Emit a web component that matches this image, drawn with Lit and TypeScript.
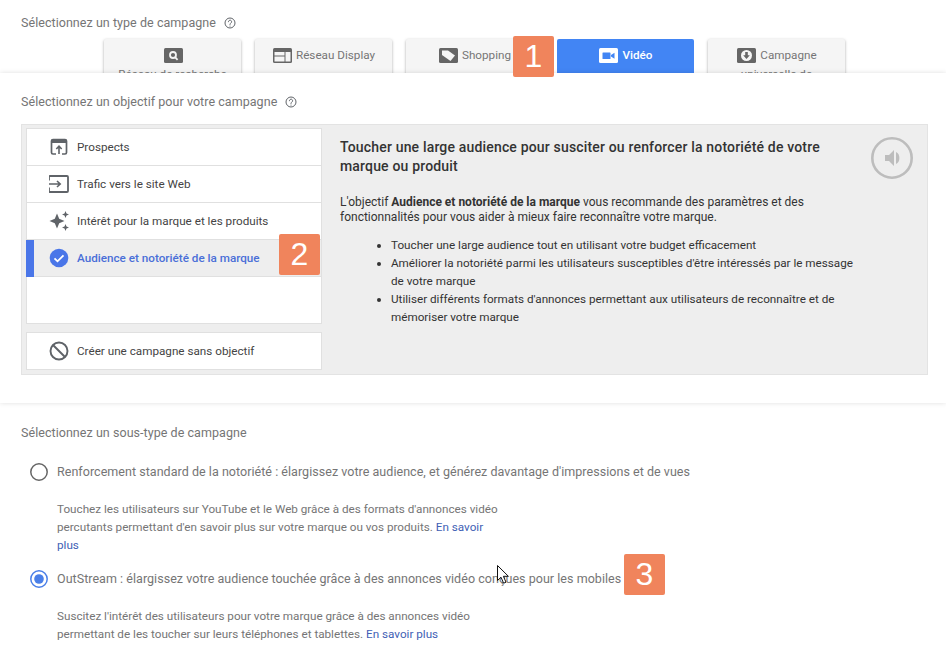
import { LitElement, html, css, svg } from "lit";
import { customElement } from "lit/decorators.js";

const help = html`<svg class="help" viewBox="0 0 24 24" fill="none" stroke="#5f6368" stroke-width="2"><circle cx="12" cy="12" r="10"/><path d="M8.8 9.5a3.2 3.2 0 1 1 5 2.6c-1.2.9-1.8 1.4-1.8 2.9" stroke-linecap="round"/><circle cx="12" cy="18" r="1.2" fill="#5f6368" stroke="none"/></svg>`;

const tabIcon = (inner: unknown, bg = "#666") => html`<svg class="tabicon" viewBox="0 0 19 15"><rect width="19" height="15" rx="1.5" fill="${bg}"/>${inner}</svg>`;

@customElement("app-root")
export class AppRoot extends LitElement {
  static styles = css`
    :host { display: block; position: relative; width: 946px; height: 666px; overflow: hidden; background: #fff; font-family: Roboto, sans-serif; color: #6b6b6b; font-size: 12px; }
    .top { height: 73px; overflow: hidden; box-sizing: border-box; padding: 15px 21px 0; }
    .label { display: flex; align-items: center; gap: 8px; font-size: 12.5px; line-height: 16px; color: #757575; letter-spacing: 0.05px; }
    .help { width: 12px; height: 12px; }
    .tabs { display: flex; gap: 14px; margin: 8px 0 0 83px; }
    .tab { width: 137px; height: 60px; flex: none; box-sizing: border-box; background: #f5f5f5; border-radius: 2px; box-shadow: 0 1px 3px rgba(0,0,0,.35); padding-top: 9px; text-align: center; font-size: 11.7px; line-height: 15px; color: #757575; }
    .tab.on { background: #4285f4; color: #fff; box-shadow: none; font-weight: 500; }
    .tabline { display: flex; justify-content: center; align-items: center; gap: 4px; padding-left: 1px; }
    .second { margin-top: 4px; }
    .tabicon { width: 19px; height: 15px; flex: none; }
    .mid { position: relative; height: 330px; box-sizing: border-box; padding: 21px 18px 0 21px; background: #fff; box-shadow: 0 0 5px rgba(0,0,0,.13); }
    .panel { display: flex; margin-top: 14px; height: 251px; box-sizing: border-box; background: #eee; border: 1px solid #e3e3e3; padding: 3px 4px; }
    .left { width: 296px; flex: none; display: flex; flex-direction: column; gap: 8px; }
    .list { height: 196px; background: #fff; border: 1px solid #e0e0e0; box-sizing: border-box; }
    .row { position: relative; display: flex; align-items: center; height: 37px; box-sizing: border-box; border-bottom: 1px solid #e0e0e0; padding: 0 0 1px 22px; gap: 8px; font-size: 11.7px; color: #444; }
    .row svg { width: 20px; height: 20px; flex: none; }
    .row.on { background: #eee; color: #4a6fd8; font-weight: 500; }
    .row.on::before { content: ""; position: absolute; left: -1px; top: 0; bottom: -1px; width: 8px; background: #4a76e8; }
    .none { height: 38px; background: #fff; border: 1px solid #e0e0e0; box-sizing: border-box; }
    .none .row { height: 36px; border: 0; }
    .right { position: relative; flex: 1; padding: 10px 0 0 18px; color: #333; line-height: 18px; }
    .right h2 { margin: 0; width: 500px; font-size: 14px; font-weight: 500; line-height: 19px; color: #333; letter-spacing: 0.17px; }
    .right p { margin: 19px 0 0; width: 500px; font-size: 12px; line-height: 15px; }
    .right ul { margin: 11px 0 0; width: 525px; padding-left: 51px; font-size: 11.7px; line-height: 18px; box-sizing: border-box; }
    .speaker { position: absolute; right: 10px; top: 9px; width: 42px; height: 42px; }
    .sub { padding: 22px 21px 0; }
    .opt { display: flex; align-items: center; gap: 9px; margin-left: 9px; font-size: 12.5px; line-height: 18px; color: #757575; letter-spacing: 0.04px; }
    .opt svg { width: 18px; height: 18px; flex: none; }
    .desc { margin: 0 0 0 36px; width: 445px; font-size: 11.7px; line-height: 18px; color: #757575; }
    .desc a { color: #3f5fb5; text-decoration: none; }
    .o1 { margin-top: 22px; }
    .d1 { margin-top: 19px; }
    .o2 { margin-top: 16px; }
    .d2 { margin-top: 19px; }
    .badge { position: absolute; width: 41px; height: 41px; border-radius: 2px; background: #f0845c; color: #fff; font-size: 32px; line-height: 41px; text-align: center; font-family: "Liberation Sans", sans-serif; }
    .b1 { left: 513px; top: 36px; }
    .b2 { left: 279px; top: 234px; }
    .b3 { left: 624px; top: 554px; }
    .cursor { position: absolute; left: 497px; top: 565px; width: 13px; height: 20px; }
  `;

  render() {
    return html`
      <div class="top">
        <div class="label">Sélectionnez un type de campagne ${help}</div>
        <div class="tabs">
          <div class="tab">
            <div class="tabline">${tabIcon(svg`<circle cx="9" cy="7" r="3" fill="none" stroke="#f5f5f5" stroke-width="1.800"/><path d="M11 9.200l2.600 2.600" stroke="#f5f5f5" stroke-width="1.800"/>`)}</div>
            <div class="second">Réseau de recherche</div>
          </div>
          <div class="tab"><div class="tabline">
            ${tabIcon(svg`<rect x="1.500" y="4" width="10" height="3.500" fill="#f5f5f5"/><rect x="1.500" y="8.500" width="10" height="5" fill="#f5f5f5"/><rect x="12.500" y="4" width="5" height="9.500" fill="#f5f5f5"/>`)}
            <span>Réseau Display</span></div></div>
          <div class="tab"><div class="tabline">
            ${tabIcon(svg`<path d="M3 2.500h6l7 5-4.500 5.500-8.500-6z" fill="#f5f5f5"/>`)}
            <span>Shopping</span></div></div>
          <div class="tab on"><div class="tabline">
            ${tabIcon(svg`<rect x="3.500" y="4.500" width="8" height="6.500" rx=".6" fill="#4285f4"/><path d="M12 7l3.500-2.200v5.900L12 8.500z" fill="#4285f4"/>`, "#fff")}
            <span>Vidéo</span></div></div>
          <div class="tab">
            <div class="tabline">
            ${tabIcon(svg`<circle cx="9.500" cy="7.500" r="5.500" fill="#f5f5f5"/><path d="M8.200 4h2.600v3.300h2L9.500 11 6.200 7.300h2z" fill="#666"/>`)}
            <span>Campagne</span></div>
            <div class="second">universelle de</div>
          </div>
        </div>
      </div>

      <div class="mid">
        <div class="label">Sélectionnez un objectif pour votre campagne ${help}</div>
        <div class="panel">
          <div class="left">
            <div class="list">
              <div class="row">
                <svg viewBox="0 0 20 20" fill="none" stroke="#5f6368" stroke-width="1.700"><path d="M7 17H4a1.500 1.500 0 0 1-1.500-1.500V4A1.500 1.500 0 0 1 4 2.500h12A1.500 1.500 0 0 1 17.500 4v11.500A1.500 1.500 0 0 1 16 17h-3"/><path d="M2.500 4.500h15" stroke-width="3"/><path d="M10 17V9.500M7.300 12L10 9.200l2.700 2.800" stroke-width="1.600"/></svg>
                Prospects
              </div>
              <div class="row">
                <svg viewBox="0 0 20 20" fill="none" stroke="#5f6368" stroke-width="1.800"><path d="M0 6.500V3a1 1 0 0 1 1-1h17a1 1 0 0 1 1 1v14a1 1 0 0 1-1 1H1a1 1 0 0 1-1-1v-3.500"/><path d="M0 10h11M8 7l3.200 3L8 13" stroke-width="1.600"/></svg>
                Trafic vers le site Web
              </div>
              <div class="row">
                <svg viewBox="0 0 20 20" fill="#5f6368"><path d="M8 2.500l2.200 5.300 5.300 2.200-5.300 2.200L8 17.500l-2.200-5.300L.5 10l5.300-2.200z"/><path d="M16.500 0l1 2.500 2.500 1-2.500 1-1 2.500-1-2.500-2.500-1 2.500-1zM16.500 13l1 2.500 2.500 1-2.500 1-1 2.500-1-2.500-2.500-1 2.500-1z"/></svg>
                Intérêt pour la marque et les produits
              </div>
              <div class="row on">
                <svg viewBox="0 0 20 20"><circle cx="10" cy="10" r="9.300" fill="#4a76e8"/><path d="M5.500 10.300l3 3 6-6" fill="none" stroke="#fff" stroke-width="1.800"/></svg>
                Audience et notoriété de la marque
              </div>
            </div>
            <div class="none">
              <div class="row">
                <svg viewBox="0 0 20 20" fill="none" stroke="#5f6368" stroke-width="1.900"><circle cx="10" cy="10" r="8.500"/><path d="M4 4l12 12"/></svg>
                Créer une campagne sans objectif
              </div>
            </div>
          </div>
          <div class="right">
            <h2>Toucher une large audience pour susciter ou renforcer la notoriété de votre marque ou produit</h2>
            <p>L'objectif <b>Audience et notoriété de la marque</b> vous recommande des paramètres et des fonctionnalités pour vous aider à mieux faire reconnaître votre marque.</p>
            <ul>
              <li>Toucher une large audience tout en utilisant votre budget efficacement</li>
              <li>Améliorer la notoriété parmi les utilisateurs susceptibles d'être intéressés par le message de votre marque</li>
              <li>Utiliser différents formats d'annonces permettant aux utilisateurs de reconnaître et de mémoriser votre marque</li>
            </ul>
            <svg class="speaker" viewBox="0 0 42 42"><circle cx="21" cy="21" r="19.700" fill="none" stroke="#bdbdbd" stroke-width="2.600"/><path d="M14 18h4l5-5v16l-5-5h-4z" fill="#bdbdbd"/><path d="M25 15c4.500 1.500 4.500 10.500 0 12z" fill="#bdbdbd"/></svg>
          </div>
        </div>
      </div>

      <div class="sub">
        <div class="label">Sélectionnez un sous-type de campagne</div>
        <div class="opt o1">
          <svg viewBox="0 0 18 18" fill="none"><circle cx="9" cy="9" r="8.200" stroke="#666" stroke-width="1.500"/></svg>
          <span>Renforcement standard de la notoriété : élargissez votre audience, et générez davantage d'impressions et de vues</span>
        </div>
        <p class="desc d1">Touchez les utilisateurs sur YouTube et le Web grâce à des formats d'annonces vidéo percutants permettant d'en savoir plus sur votre marque ou vos produits. <a>En savoir plus</a></p>
        <div class="opt o2">
          <svg viewBox="0 0 18 18" fill="none"><circle cx="9" cy="9" r="8.200" stroke="#4a7fe8" stroke-width="1.500"/><circle cx="9" cy="9" r="4.800" fill="#4a7fe8"/></svg>
          <span>OutStream : élargissez votre audience touchée grâce à des annonces vidéo conçues pour les mobiles</span>
        </div>
        <p class="desc d2">Suscitez l'intérêt des utilisateurs pour votre marque grâce à des annonces vidéo permettant de les toucher sur leurs téléphones et tablettes. <a>En savoir plus</a></p>
      </div>

      <div class="badge b1">1</div>
      <div class="badge b2">2</div>
      <div class="badge b3">3</div>
      <svg class="cursor" viewBox="0 0 13 20"><path d="M.5.500v15l3.500-3.300 2.600 6 2.400-1-2.600-5.900h5z" fill="#fff" stroke="#111" stroke-width="1"/></svg>
    `;
  }
}
